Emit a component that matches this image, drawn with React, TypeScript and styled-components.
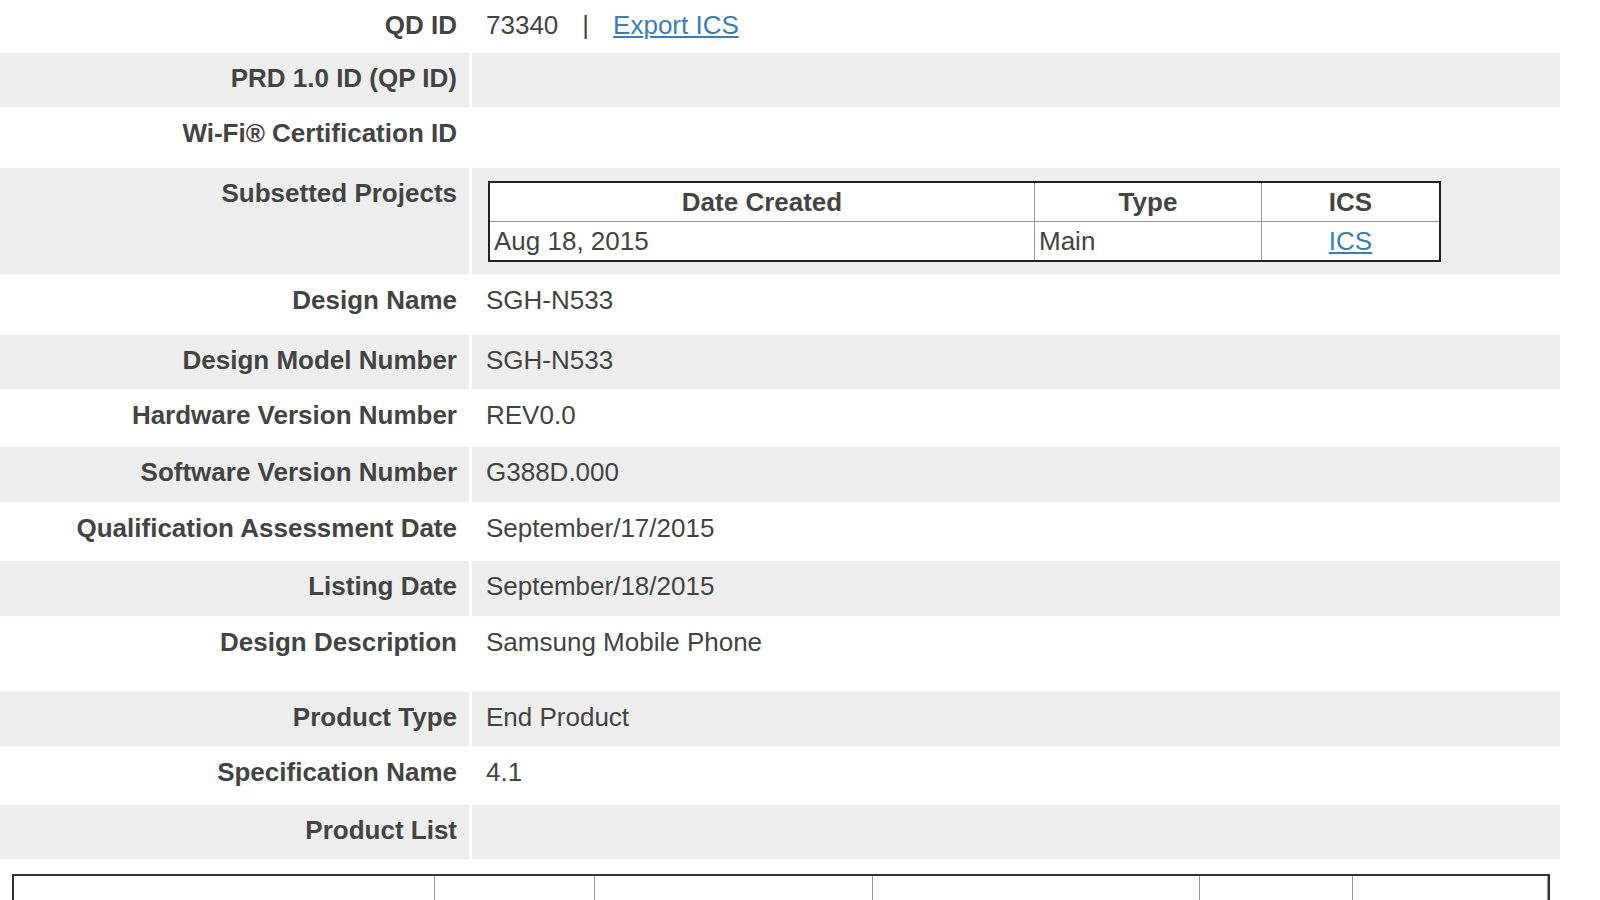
import React from "react";
import styled, { createGlobalStyle } from "styled-components";

const Global = createGlobalStyle`
  html, body { margin: 0; background: #fff; font-family: "Liberation Sans", Arial, sans-serif; color: #444; overflow: hidden; }
`;

const Page = styled.div`width: 1560px; height: 900px; overflow: hidden;`;
const Row = styled.div<{ $alt: boolean; $h: number }>`
  display: grid;
  grid-template-columns: 472px 1fr;
  height: ${(p) => p.$h}px;
  background: ${(p) => (p.$alt ? "#eeeeee" : "#fff")};
  border-bottom: 1px solid #fafafa;
  box-sizing: border-box;
`;
const Label = styled.div`
  font-size: 26px;
  font-weight: bold;
  text-align: right;
  padding: 10px 12px 0 0;
  border-right: 3px solid #fff;
`;
const Value = styled.div`
  font-size: 26px;
  padding: 10px 0 0 14px;
`;
const Link = styled.a`color: #3a7fb0; text-decoration: underline;`;
const Sep = styled.span`margin: 0 24px;`;
const SubTable = styled.table`
  border-collapse: collapse;
  border: 2px solid #222;
  width: 953px;
  margin: 1px 0 0 2px;
  font-size: 26px;
  background: #fff;
  th, td { border: 1px solid #999; padding: 4px 4px 3px; }
  th { font-weight: bold; text-align: center; }
`;
const BottomTable = styled.div`
  margin: 14px 10px 0 12px;
  height: 30px;
  border: 2px solid #333;
  border-bottom: none;
  display: grid;
  grid-template-columns: 421px 160px 278px 327px 153px 1fr;
  & > div { border-right: 1px solid #999; }
`;

const rows: [string, React.ReactNode, number?][] = [
  ["PRD 1.0 ID (QP ID)", ""],
  ["Wi-Fi® Certification ID", "", 60],
];
const rest: [string, string, number?][] = [
  ["Design Name", "SGH-N533", 60],
  ["Design Model Number", "SGH-N533"],
  ["Hardware Version Number", "REV0.0", 57],
  ["Software Version Number", "G388D.000", 56],
  ["Qualification Assessment Date", "September/17/2015", 58],
  ["Listing Date", "September/18/2015", 56],
  ["Design Description", "Samsung Mobile Phone", 75],
  ["Product Type", "End Product"],
  ["Specification Name", "4.1", 58],
  ["Product List", ""],
];

export default function App() {
  return (
    <Page>
      <Global />
      <Row $alt={false} $h={53}>
        <Label>QD ID</Label>
        <Value>73340<Sep>|</Sep><Link href="#">Export ICS</Link></Value>
      </Row>
      {rows.map(([l, v, h], i) => (
        <Row key={l} $alt={i % 2 === 0} $h={h ?? 55}>
          <Label>{l}</Label>
          <Value>{v}</Value>
        </Row>
      ))}
      <Row $alt $h={107}>
        <Label>Subsetted Projects</Label>
        <Value style={{ paddingTop: 12 }}>
          <SubTable>
            <thead>
              <tr><th style={{ width: 536 }}>Date Created</th><th style={{ width: 218 }}>Type</th><th>ICS</th></tr>
            </thead>
            <tbody>
              <tr><td>Aug 18, 2015</td><td>Main</td><td style={{ textAlign: "center" }}><Link href="#">ICS</Link></td></tr>
            </tbody>
          </SubTable>
        </Value>
      </Row>
      {rest.map(([l, v, h], i) => (
        <Row key={l} $alt={i % 2 === 1} $h={h ?? 55}>
          <Label>{l}</Label>
          <Value>{v}</Value>
        </Row>
      ))}
      <BottomTable>
        <div /><div /><div /><div /><div /><div />
      </BottomTable>
    </Page>
  );
}
